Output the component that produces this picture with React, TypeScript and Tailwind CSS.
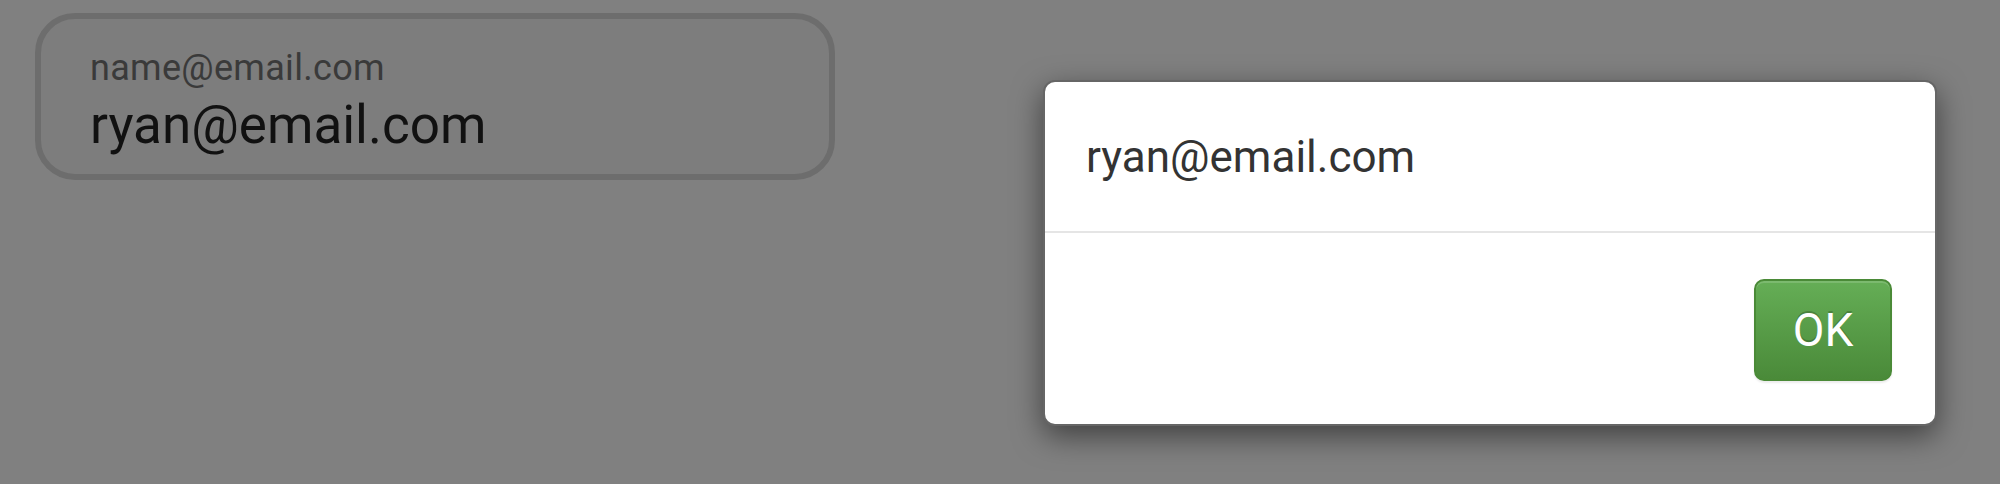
export default function App() {
  return (
    <div
      className="relative w-full h-[484px] bg-[#808080] overflow-hidden"
      style={{ fontFamily: 'Roboto, "Liberation Sans", sans-serif' }}
    >
      <div className="pt-[13px] pl-[35px]">
        <div className="w-[800px] h-[167px] rounded-[40px] border-[6px] border-[#6d6d6d] bg-[#7d7d7d] pl-[49px] pt-[31px]">
          <div className="text-[36px] leading-[36px] tracking-[0.3px] text-[#3a3a3a]">name@email.com</div>
          <div className="mt-[13px] text-[53px] leading-[53px] text-[#111111]">ryan@email.com</div>
        </div>
      </div>

      <div className="absolute left-[1043px] top-[80px] w-[894px] h-[346px] rounded-[12px] border-2 border-[#666666] bg-white shadow-[0_10px_30px_rgba(0,0,0,0.5)] flex flex-col">
        <div className="pl-[41px] pt-[53px] h-[149px] text-[44px] leading-[44px] text-[#333333]">
          ryan@email.com
        </div>
        <div className="flex-1 border-t-2 border-[#e5e5e5] flex justify-end items-start pt-[46px] pr-[43px]">
          <button className="w-[138px] h-[102px] rounded-[10px] border-2 border-[#4a8a37] bg-gradient-to-b from-[#65ae56] to-[#4a8a39] text-white text-[46px] leading-none shadow-[inset_0_2px_0_rgba(255,255,255,0.15),0_2px_2px_rgba(0,0,0,0.075)] [text-shadow:0_-2px_0_rgba(0,0,0,0.2)]">
            OK
          </button>
        </div>
      </div>
    </div>
  );
}
